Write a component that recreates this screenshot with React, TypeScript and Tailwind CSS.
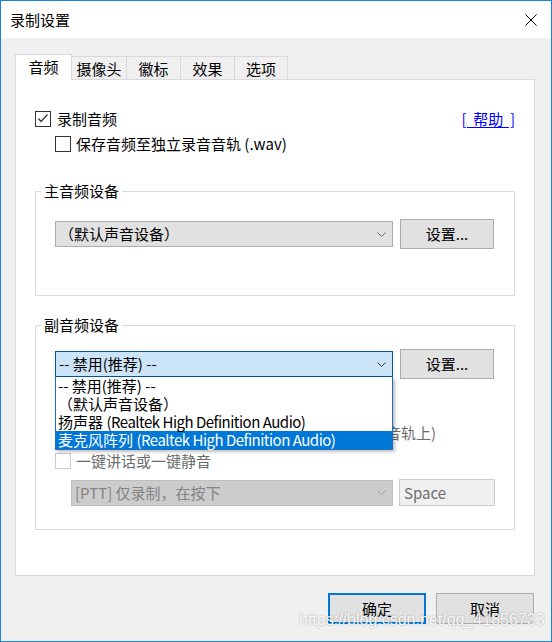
import React from "react";

const ITEMS = [
  { cjk: "-- 禁用(推荐) --", latin: "" },
  { cjk: "（默认声音设备）", latin: "" },
  { cjk: "扬声器 ", latin: "(Realtek High Definition Audio)" },
  { cjk: "麦克风阵列 ", latin: "(Realtek High Definition Audio)" },
];

const TABS = [
  { label: "摄像头", w: "w-[55px]" },
  { label: "徽标", w: "w-[54px]" },
  { label: "效果", w: "w-[54px]" },
  { label: "选项", w: "w-[53px]" },
];

const Chevron = ({ color = "#606060" }: { color?: string }) => (
  <svg width="9" height="5" viewBox="0 0 9 5" fill="none">
    <path d="M0.5 0.5 L4.5 4.5 L8.5 0.5" stroke={color} strokeWidth="1" />
  </svg>
);

const CheckBox = ({ checked = false, disabled = false }) => (
  <span
    className={
      disabled
        ? "w-4 h-4 shrink-0 border border-[#cccccc] bg-white"
        : "w-4 h-4 shrink-0 border border-[#333333] bg-white flex items-center justify-center"
    }
  >
    {checked && (
      <svg width="14" height="14" viewBox="0 0 14 14" fill="none">
        <path d="M2.5 6.5 L5 9.5 L11.5 2.5" stroke="#333333" strokeWidth="1.2" />
      </svg>
    )}
  </span>
);

const Button = ({ children }: { children: React.ReactNode }) => (
  <div className="w-[94px] h-[30px] shrink-0 border border-[#adadad] bg-[#e1e1e1] flex items-center justify-center">
    {children}
  </div>
);

export default function App() {
  return (
    <div className="relative w-[552px] h-[642px] border border-[#1883d7] bg-[#f0f0f0] flex flex-col text-[15px] leading-[18px] text-black font-['Noto_Sans_CJK_SC',sans-serif]">
      {/* Title bar */}
      <div className="h-[37px] bg-white flex items-center justify-between pl-[9px] pr-[14px]">
        <span>录制设置</span>
        <svg width="12" height="12" viewBox="0 0 12 12" fill="none">
          <path d="M0.5 0.5 L11.5 11.5 M11.5 0.5 L0.5 11.5" stroke="#000" strokeWidth="1" />
        </svg>
      </div>

      <div className="flex-1 flex flex-col pl-[14px] pr-[16px] pt-[16px]">
        {/* Tabs */}
        <div className="flex items-end h-[25px]">
          <div className="relative z-10 w-[57px] h-[26px] -mb-px bg-white border border-b-0 border-[#d9d9d9] flex items-center justify-center pb-[2px]">
            音频
          </div>
          {TABS.map((t) => (
            <div
              key={t.label}
              className={`${t.w} h-[23px] border-t border-r border-[#d9d9d9] flex items-center justify-center pt-[1px]`}
            >
              {t.label}
            </div>
          ))}
        </div>

        {/* Panel */}
        <div className="h-[497px] bg-white border border-[#d9d9d9] flex flex-col px-[19px] pt-[30px]">
          <div className="h-[18px] flex items-center gap-[6px]">
            <CheckBox checked />
            <span>录制音频</span>
            <a className="ml-auto text-[#0000ff] underline underline-offset-2 whitespace-pre">[  帮助  ]</a>
          </div>
          <div className="h-[18px] mt-[7px] pl-[20px] flex items-center gap-[5px]">
            <CheckBox />
            <span>保存音频至独立录音音轨 (.wav)</span>
          </div>

          {/* Main device */}
          <fieldset className="mt-[28px] border border-[#dcdcdc] pb-[46px]">
            <legend className="ml-[5px] px-[3px] leading-[20px]">主音频设备</legend>
            <div className="mt-[18px] pl-[19px] flex items-center gap-[7px]">
              <div className="w-[338px] h-[26px] border border-[#adadad] bg-[#e1e1e1] flex items-center justify-between pl-[3px] pr-[6px]">
                <span>（默认声音设备）</span>
                <Chevron />
              </div>
              <Button>设置...</Button>
            </div>
          </fieldset>

          {/* Secondary device */}
          <fieldset className="mt-[19px] border border-[#dcdcdc] pb-[23px]">
            <legend className="ml-[5px] px-[3px] leading-[20px]">副音频设备</legend>
            <div className="mt-[14px] pl-[19px] flex items-center gap-[7px]">
              <div className="relative w-[338px] h-[26px]">
                <div className="h-full border border-[#005499] bg-[#cce4f7] flex items-center justify-between pl-[3px] pr-[6px]">
                  <span>-- 禁用(推荐) --</span>
                  <Chevron color="#404040" />
                </div>
                <div className="absolute z-20 top-full left-0 w-full bg-white border border-t-0 border-[#1e6fc0] shadow-[2px_2px_3px_rgba(0,0,0,0.25)]">
                  {ITEMS.map((item, i) => (
                    <div
                      key={item.cjk}
                      className={
                        i === 3
                          ? "h-[18px] pl-[2px] flex items-center whitespace-pre bg-[#0078d7] text-white"
                          : "h-[18px] pl-[2px] flex items-center whitespace-pre"
                      }
                    >
                      {item.cjk}
                      {item.latin && <span className="tracking-[-0.5px]">{item.latin}</span>}
                    </div>
                  ))}
                </div>
              </div>
              <Button>设置...</Button>
            </div>

            <div className="h-[18px] mt-[45px] pl-[19px] flex items-center gap-[5px] text-[#6d6d6d]">
              <CheckBox disabled />
              <span className="w-[360px] overflow-hidden whitespace-nowrap flex justify-end">
                <span className="shrink-0">将副音频与主音频混合（录制在同一个音轨上)</span>
              </span>
            </div>

            <div className="h-[18px] mt-[10px] pl-[19px] flex items-center gap-[5px] text-[#6d6d6d]">
              <CheckBox disabled />
              <span>一键讲话或一键静音</span>
            </div>

            <div className="mt-[9px] pl-[35px] flex items-center gap-[6px]">
              <div className="w-[322px] h-[26px] border border-[#bfbfbf] bg-[#cccccc] flex items-center justify-between pl-[3px] pr-[6px] text-[#838383]">
                <span>[PTT] 仅录制，在按下</span>
                <Chevron color="#a0a0a0" />
              </div>
              <div className="w-[96px] h-[27px] border border-[#cccccc] bg-[#f0f0f0] flex items-center pl-[4px] text-[#6d6d6d]">
                Space
              </div>
            </div>
          </fieldset>
        </div>

        {/* Footer buttons */}
        <div className="mt-[17px] flex justify-end gap-[10px] pr-px">
          <div className="w-[98px] h-[31px] border-2 border-[#0078d7] bg-[#e1e1e1] flex items-center justify-center">
            确定
          </div>
          <div className="w-[98px] h-[31px] border border-[#adadad] bg-[#e1e1e1] flex items-center justify-center">
            取消
          </div>
        </div>
      </div>

      {/* watermark */}
      <div className="absolute left-[298px] top-[609px] text-[16px] leading-[20px] text-white/90 font-['Liberation_Sans',sans-serif] text-shadow-[0_0_2px_rgb(0_0_0/0.35)] pointer-events-none">
        https://blog.csdn.net/qq_41856733
      </div>
    </div>
  );
}
